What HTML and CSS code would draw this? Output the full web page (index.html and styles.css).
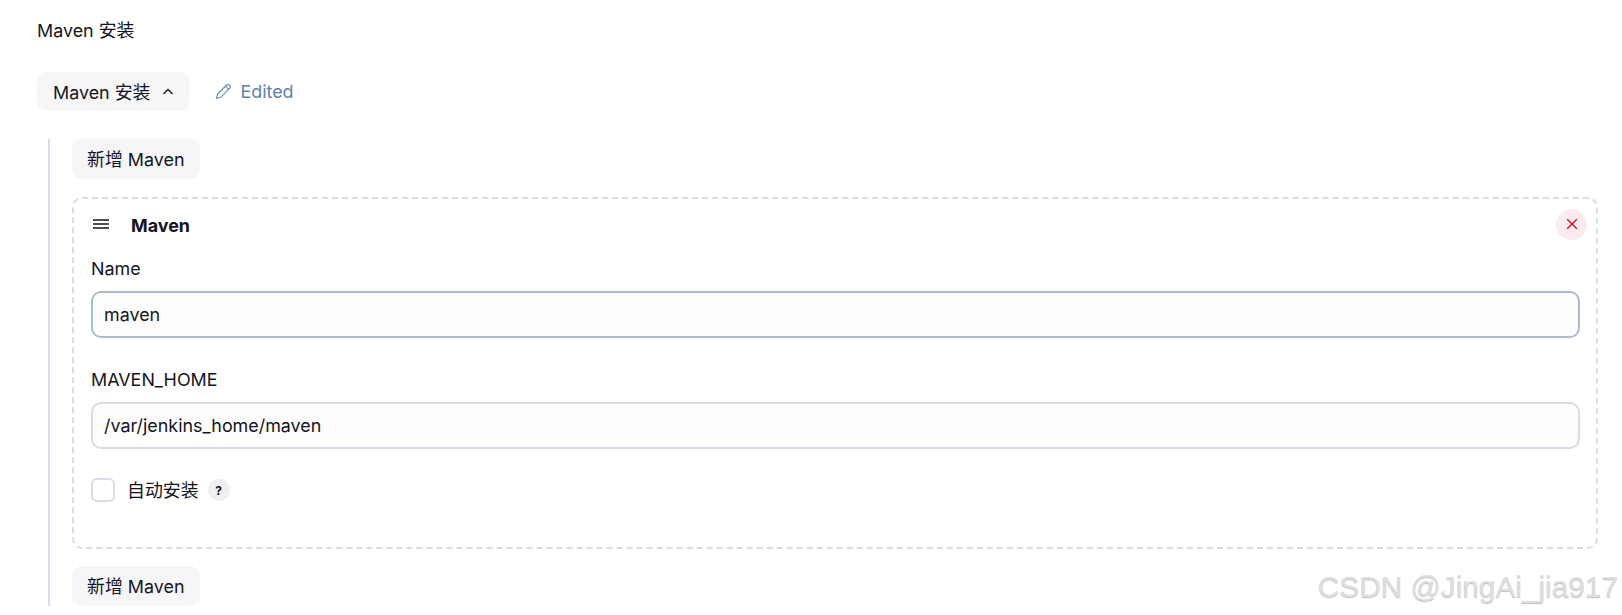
FILE: index.html

```html
<!DOCTYPE html>
<html lang="zh">
<head>
  <meta charset="UTF-8" />
  <title>Maven 安装</title>
  <link rel="stylesheet" href="styles.css">
</head>
<body>
  <div class="page">
    <div class="section-title">Maven 安装</div>

    <div class="toolbar">
      <button class="btn btn-toggle">Maven 安装
        <svg class="chevron" width="12" height="12" viewBox="0 0 12 12"><path d="M1.5 8 L6 3.6 L10.5 8" fill="none" stroke="#14141f" stroke-width="1.4"/></svg>
      </button>
      <span class="edited">
        <svg width="17" height="17" viewBox="0 0 17 17"><path d="M1.5 15.5 L2.6 11 L11.6 2 Q13 1 14.6 2.2 Q15.8 3.8 14.8 5.2 L5.8 14.2 Z M10.4 3.2 L13.6 6.4" fill="none" stroke="#6d8db5" stroke-width="1.2" stroke-linejoin="round"/></svg>
        Edited
      </span>
    </div>

    <div class="repeat">
      <button class="btn">新增 Maven</button>

      <div class="card">
        <div class="card-head">
          <svg class="handle" width="18" height="12" viewBox="0 0 18 12"><path d="M1 2 H17 M1 6 H17 M1 10 H17" stroke="#14141f" stroke-width="1.5"/></svg>
          <b>Maven</b>
          <span class="close">
            <svg width="12" height="12" viewBox="0 0 12 12"><path d="M1.2 1.2 L10.8 10.8 M10.8 1.2 L1.2 10.8" stroke="#e6001f" stroke-width="1.3"/></svg>
          </span>
        </div>

        <label class="field-label">Name</label>
        <input class="field field-focus" type="text" value="maven" />

        <label class="field-label label-home">MAVEN_HOME</label>
        <input class="field" type="text" value="/var/jenkins_home/maven" />

        <div class="check-row">
          <span class="check"></span>
          <span class="check-text">自动安装</span>
          <span class="help">?</span>
        </div>
      </div>

      <button class="btn">新增 Maven</button>
    </div>
  </div>

  <div class="watermark">CSDN @JingAi_jia917</div>
</body>
</html>
```

FILE: styles.css

```css
html, body { margin: 0; padding: 0; }
body { background: #fff; color: #14141f; font-family: Inter, "Noto Sans CJK SC", sans-serif; font-size: 17.9px; height: 615px; overflow: hidden; position: relative; }
.page { padding: 20px 24px 0 37px; }
.section-title { line-height: 22px; height: 22px; }
.toolbar { display: flex; align-items: center; margin-top: 30px; height: 39px; }
.btn { display: inline-flex; align-items: center; height: 40px; padding: 0 16px 2px 15px; box-sizing: border-box; border: none; border-radius: 10px; background: #f6f6f9; color: #14141f; font: inherit; }
.btn-toggle { height: 39px; padding-left: 16px; padding-right: 16px; }
.chevron { margin-left: 12px; margin-top: 2px; }
.edited { display: inline-flex; align-items: center; gap: 8px; margin-left: 25px; padding-bottom: 1px; color: #5f82ad; }
.repeat { margin: 28px 0 0 11px; padding-left: 22px; border-left: 2px solid #d6dde9; height: 467px; }
.card { width: 1526px; height: 352px; box-sizing: border-box; margin: 18px 0 17px; padding: 0 16px 0 17px; border: 2px dashed #d6dde9; border-radius: 10px; }
.card-head { display: flex; align-items: center; height: 50px; font-weight: 600; }
.card-head b { font-weight: 700; padding-top: 2px; }
.handle { margin: 0 21px 0 1px; }
.close { display: flex; align-items: center; justify-content: center; width: 31px; height: 31px; margin-left: auto; margin-right: -7px; border-radius: 50%; background: #fbebee; }
.field-label { display: block; height: 22px; line-height: 22px; margin: 9px 0 11px; }
.label-home { margin-top: 31px; }
.field { display: block; width: 100%; height: 47px; box-sizing: border-box; padding: 0 11px; border: 2px solid #d6dde9; border-radius: 10px; background: #fdfdfd; color: #14141f; font: inherit; outline: none; }
.field-focus { border-color: #adbbd0; }
.check-row { display: flex; align-items: center; margin-top: 27px; }
.check { width: 20px; height: 20px; border: 2px solid #d6dde9; border-radius: 6px; }
.check-text { margin-left: 12px; padding-bottom: 2px; }
.help { display: flex; align-items: center; justify-content: center; width: 22px; height: 22px; margin-left: 9px; border-radius: 50%; background: #eef0f4; font-size: 12px; font-weight: 700; }
.watermark { position: absolute; right: 4px; top: 570px; font-family: "Liberation Sans", sans-serif; font-size: 29.8px; color: #dedede; text-shadow: 0 1px 1px #c0c0c0; white-space: nowrap; }
```
